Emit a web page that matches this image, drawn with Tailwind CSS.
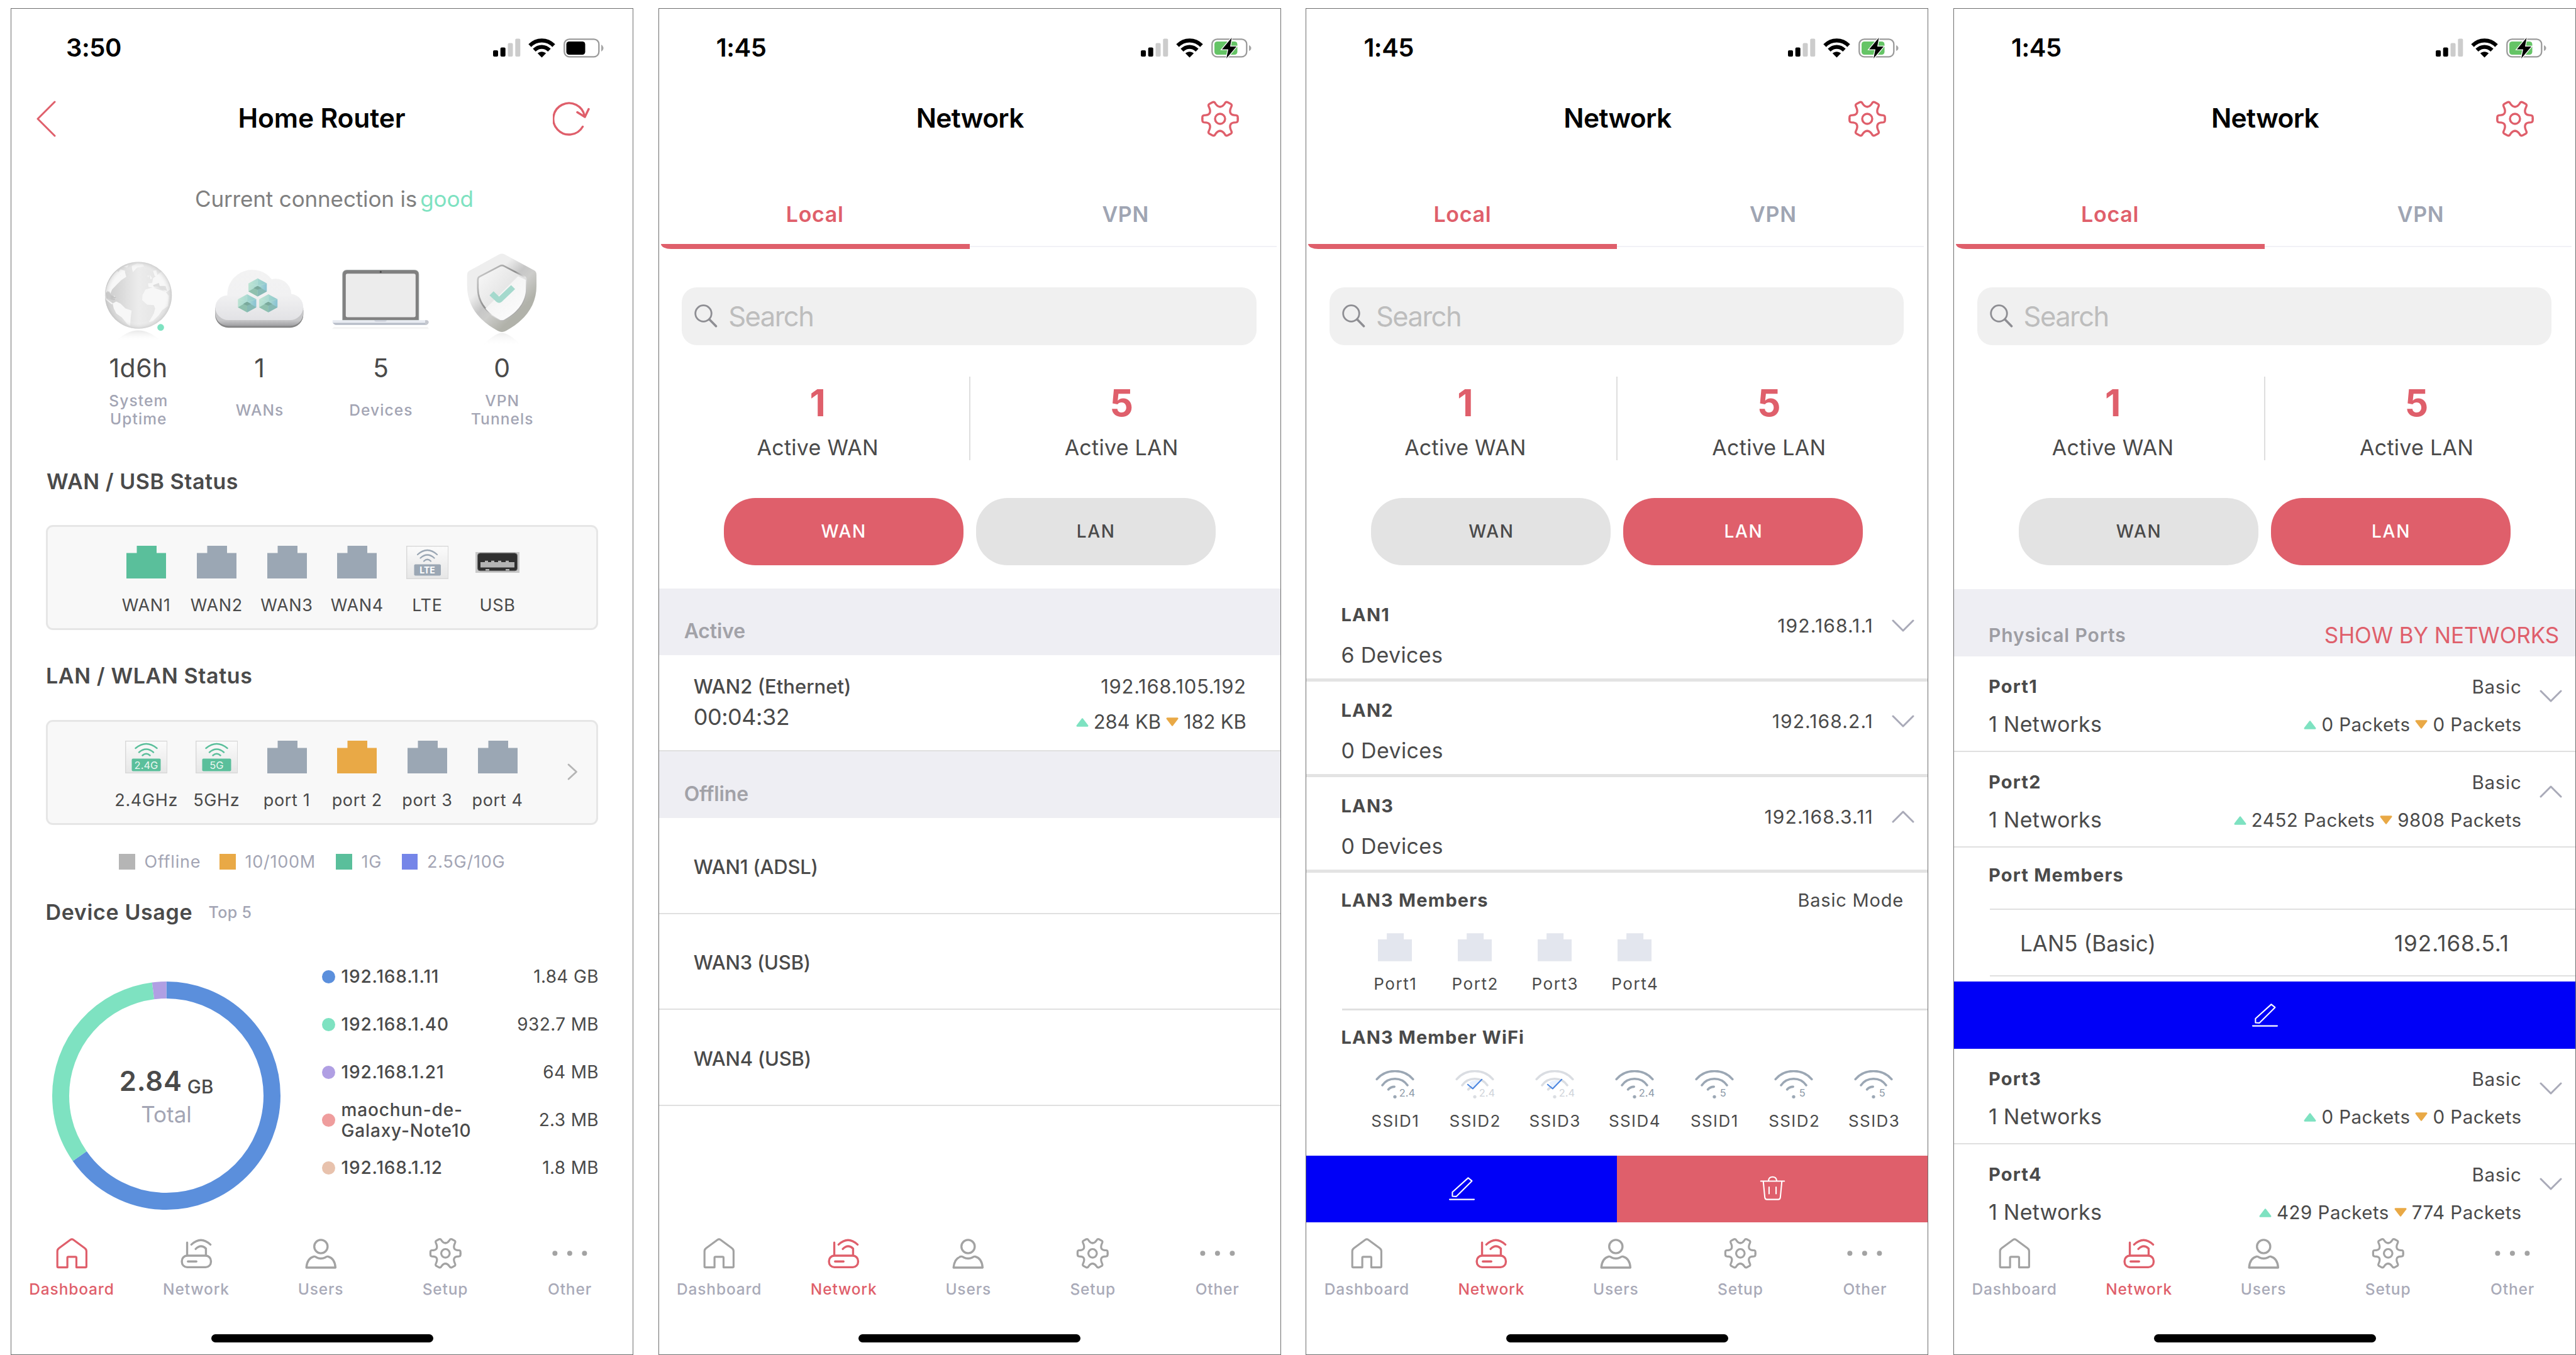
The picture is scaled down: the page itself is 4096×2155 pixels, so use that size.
<!DOCTYPE html>
<html lang="en">
<head>
<meta charset="utf-8">
<title>Router</title>
<script src="https://cdn.jsdelivr.net/npm/@tailwindcss/browser@4"></script>
</head>
<body class="h-[2155px] w-[4096px] overflow-hidden bg-white font-['Inter',sans-serif] text-[#4a4a4a]">

<svg class="absolute size-0" xmlns="http://www.w3.org/2000/svg">
  <defs>
    <path id="gear-quarter" d="M0-20.5C4-20.5 6-23 8-26Q9.8-29.5 13-28L18-25.3Q20.7-24 19-20.5C16.8-16 16-12 18-9C20-6 23.500-6 27-6Q30-5.800 30-2.500V0"/>
    <symbol id="gear" viewBox="-33 -33 66 66">
      <g fill="none" stroke="currentColor" stroke-linecap="round" stroke-linejoin="round">
        <use href="#gear-quarter"/><use href="#gear-quarter" transform="scale(-1 1)"/>
        <use href="#gear-quarter" transform="scale(1 -1)"/><use href="#gear-quarter" transform="scale(-1 -1)"/>
        <circle r="8.500"/>
      </g>
    </symbol>
    <symbol id="home" viewBox="-33 -33 66 66">
      <path fill="none" stroke="currentColor" stroke-width="4" stroke-linejoin="round" d="M-9 28V9Q-9 7-7 7H7Q9 7 9 9V28H27Q29 28 29 26V-4Q29-8 26-10L3-27Q0-29-3-27L-26-10Q-29-8-29-4V26Q-29 28-27 28Z"/>
    </symbol>
    <symbol id="router" viewBox="-33 -33 66 66">
      <g fill="none" stroke="currentColor" stroke-width="4.200" stroke-linecap="round">
        <rect x="-29" y="4.700" width="58" height="23" rx="10.500"/>
        <path d="M-17 16.300H0M-18.500-21.500V4M-10-17.500Q9-35.500 28-17.500M-1.500-8.700Q9-19 19-9.500V4"/>
      </g>
    </symbol>
    <symbol id="user" viewBox="-33 -33 66 66">
      <g fill="none" stroke="currentColor" stroke-width="4.200" stroke-linejoin="round">
        <circle cy="-13.500" r="13.300"/>
        <path d="M-29 28.500C-28 16-22 8.500-14 6.500Q-11.500 6-9 8Q0 12.500 9 8Q11.500 6 14 6.500C22 8.500 28 16 29 28.500Z"/>
      </g>
    </symbol>
    <symbol id="dots" viewBox="-40 -33 80 66">
      <g fill="currentColor"><circle cx="-29.500" r="5"/><circle r="5"/><circle cx="29.500" r="5"/></g>
    </symbol>
    <symbol id="port" viewBox="0 0 63 52">
      <path fill="currentColor" d="M0 52V11.500H16.500V0H48V11.500H63V52Z"/>
    </symbol>
    <symbol id="pencil" viewBox="-27 -27 54 54">
      <path fill="none" stroke="#fff" stroke-width="2.600" stroke-linejoin="round" stroke-linecap="round" d="M-19 15V7L12.500-21.500L20-15.500L-11 15.500ZM-24.500 21.500H24.500"/>
    </symbol>
    <symbol id="trash" viewBox="-27 -27 54 54">
      <path fill="none" stroke="#fff" stroke-width="2.600" stroke-linejoin="round" stroke-linecap="round" d="M-23.500-15H23.500M-8-15V-17Q-7-23.500 0-23.500T8-17V-15M-18.500-14L-15.500 17Q-15 21.500-11 21.500H11Q15 21.500 15.500 17L18.500-14M-7-3V10M7-3V10"/>
    </symbol>
    <symbol id="chevron-down" viewBox="0 0 36 20">
      <path fill="none" stroke="currentColor" stroke-width="3" stroke-linecap="round" stroke-linejoin="round" d="M2 2L18 18L34 2"/>
    </symbol>
    <symbol id="tri-up" viewBox="0 0 20 14"><path fill="#7ee2c1" stroke="#7ee2c1" stroke-width="3" stroke-linejoin="round" d="M10 1.800L18 12.300H2Z"/></symbol>
    <symbol id="tri-down" viewBox="0 0 20 14"><path fill="#e9a946" stroke="#e9a946" stroke-width="3" stroke-linejoin="round" d="M10 12.200L18 1.700H2Z"/></symbol>
    <linearGradient id="tile" x2="0" y2="1"><stop stop-color="#fbfbfb"/><stop offset="1" stop-color="#e6e6e6"/></linearGradient>
    <linearGradient id="globe-fill"><stop stop-color="#c9c9c9"/><stop offset=".5" stop-color="#ececec"/><stop offset="1" stop-color="#e0e0e0"/></linearGradient>
    <radialGradient id="globe-rim"><stop offset=".8" stop-color="#fff" stop-opacity="0"/><stop offset="1" stop-color="#bdbdbd" stop-opacity=".55"/></radialGradient>
    <linearGradient id="fade" x2="0" y2="1"><stop stop-color="#d8d8d8"/><stop offset="1" stop-color="#fff" stop-opacity="0"/></linearGradient>
    <linearGradient id="cloud-top" x2="0" y2="1"><stop stop-color="#f3f3f3"/><stop offset=".5" stop-color="#f1f1f2"/><stop offset="1" stop-color="#e2e2e5"/></linearGradient>
    <linearGradient id="cloud-side" x2="0" y2="1"><stop offset=".7" stop-color="#c6c6c8"/><stop offset="1" stop-color="#9e9ea1"/></linearGradient>
    <linearGradient id="hex" x2="1" y2=".2"><stop stop-color="#bfe5d2"/><stop offset=".6" stop-color="#a9d9d3"/><stop offset="1" stop-color="#8cc4d3"/></linearGradient>
    <g id="cube">
      <path fill="url(#hex)" d="M0-54L55-24V24L0 54L-55 24V-24Z"/>
      <path fill="#97cfc9" fill-opacity=".5" d="M0-54L55-24L0-8Z"/>
      <path fill="#8fc0ae" d="M0-8L-55 24L0 54Z"/><path fill="#86b9b4" d="M0-8L55 24L0 54Z"/>
      <path fill="#7aa99c" d="M0-10L24 4L0 14L-24 4Z"/><path fill="none" stroke="#c8ebdf" stroke-opacity=".6" stroke-width="2" d="M0-54V-10M0-10L-55-24M0-10L55-24"/>
    </g>
    <linearGradient id="shield-rim" x1=".1" y1=".1" x2=".8" y2=".9"><stop offset=".3" stop-color="#eeeeee"/><stop offset=".5" stop-color="#c6c6c6"/><stop offset=".62" stop-color="#cdcdcb"/><stop offset=".85" stop-color="#b1b2aa"/></linearGradient>
    <linearGradient id="shield-edge" x2="1" y2="1"><stop stop-color="#d5d5d5"/><stop offset=".45" stop-color="#8e8e8e"/><stop offset=".6" stop-color="#e3e3e3"/><stop offset="1" stop-color="#777"/></linearGradient>
    <linearGradient id="shield-a" x2="1" y2="1"><stop stop-color="#fafafa"/><stop offset="1" stop-color="#d2d2d2"/></linearGradient>
    <linearGradient id="shield-b" x2="1" y2="1"><stop stop-color="#eee"/><stop offset="1" stop-color="#fff"/></linearGradient>
    <path id="shield-in" d="M1040 121Q1053 114 1066 121L1188 185Q1197 190 1197 204V252C1197 335 1147 398 1068 441Q1053 450 1038 441C960 398 909 335 909 252V204Q909 190 918 185Z"/>
    <clipPath id="shield-clip"><use href="#shield-in"/></clipPath>
    <clipPath id="globe-clip"><circle cx="257.500" cy="296" r="200"/></clipPath>
  </defs>
</svg>

<main id="board" class="flex gap-[39.7px] pt-[13px] pl-[17px]"></main>

<script>
const icon = (name, cls, extra = '') => `<svg class="${cls}" ${extra}><use href="#${name}"/></svg>`;

const battery = charging => charging
  ? `<svg class="h-[33px] w-[66px]" viewBox="0 0 66 33">
      <rect x="2.300" y="2.300" width="55" height="28" rx="8" fill="none" stroke="#9b9b9b" stroke-width="2.300"/>
      <path fill="#a6a6a6" d="M61 12Q64.500 13.500 64.500 16.500T61 21Z"/>
      <rect x="6" y="6" width="36.500" height="21" rx="4.500" fill="#65c466"/>
      <path fill="#000" stroke="#fff" stroke-width="2.500" paint-order="stroke" d="M33.500 0L18 18.500H28L25 33L41 14H31Z"/></svg>`
  : `<svg class="h-[33px] w-[66px]" viewBox="0 0 66 33">
      <rect x="2.300" y="2.300" width="55" height="28" rx="8" fill="none" stroke="#9b9b9b" stroke-width="2.300"/>
      <path fill="#a6a6a6" d="M61 11Q64.500 13.500 64.500 16.500T61 22Z"/>
      <rect x="5.500" y="6" width="30" height="21" rx="4.500" fill="#000"/></svg>`;

const statusBar = (time, charging) => `
  <div class="flex h-[124px] shrink-0 items-center justify-between pr-[45px] pl-[87px] text-[40px] leading-none font-semibold tracking-[-0.011em] text-black">
    <span class="${charging ? 'pl-[4px]' : ''}">${time}</span>
    <div class="flex items-center">
      <svg class="mr-[12px] h-[30px] w-[44px]" viewBox="0 0 44 30">
        <rect y="19" width="8" height="10" rx="2"/><rect x="11.700" y="14.500" width="8" height="14.500" rx="2"/>
        <rect x="23.500" y="7.500" width="8" height="21.500" rx="2" fill="#ccc"/><rect x="35.300" y="0.500" width="8" height="28.500" rx="2" fill="#ccc"/>
      </svg>
      <svg class="mr-[12px] h-[31px] w-[43px]" viewBox="0 0 43 31">
        <path fill="none" stroke="#000" stroke-width="6.200" d="M2.500 11.500C13 .600 30 .600 40.500 11.500M9.500 18.800C16.500 11.800 26.500 11.800 33.500 18.800"/>
        <path d="M21.500 30.500L14.800 23.800C18.500 20.300 24.500 20.300 28.200 23.800Z"/>
      </svg>
      ${battery(charging)}
    </div>
  </div>`;

const navBar = active => `
  <nav class="h-[210px] shrink-0 pt-[23px]">
    <div class="-ml-[3px] grid w-[990px] grid-cols-5">
      ${[['Dashboard', 'home'], ['Network', 'router'], ['Users', 'user'], ['Setup', 'gear'], ['Other', 'dots']].map(([label, name]) => `
      <div class="flex flex-col items-center ${label === active ? 'text-[#df5f6b]' : 'text-[#a3a3a3]'}">
        ${icon(name, name === 'dots' ? 'h-[52.600px] w-[63.800px]' : 'h-[52.600px] w-[52.600px]', 'stroke-width="4"')}
        <div class="mt-[10px] h-[40px] text-[24.5px] leading-[40px] font-medium tracking-[0.034em] ${label === active ? 'text-[#df5f6b]' : 'text-[#a9aab8]'}">${label}</div>
      </div>`).join('')}
    </div>
    <div class="mx-auto mt-[52.100px] h-[13px] w-[353px] rounded-full bg-black"></div>
  </nav>`;

const panel = (body, nav) => `<section class="flex h-[2142px] w-[990px] shrink-0 flex-col border border-[#6e6e6e] bg-white">
  <div class="flex h-[1930px] shrink-0 flex-col">${body}</div>${navBar(nav)}</section>`;

/* ---------- dashboard ---------- */
const globe = `<svg class="h-[159.4px] w-[154.1px]" viewBox="-32.5 0 580 600">
  <path fill="url(#fade)" opacity=".6" d="M120 572Q257 440 395 572Z"/>
  <circle cx="257.500" cy="296" r="200" fill="url(#globe-fill)"/>
  <g clip-path="url(#globe-clip)" fill="#f7f7f7">
    <path d="M55 300Q70 200 130 150L145 165Q130 185 150 180L175 150L185 185L155 205L125 235L100 262L90 285L75 270L62 280L66 315L85 330L105 345L98 350L60 320Z"/>
    <path d="M120 180L150 140L178 150L172 165L140 185Z"/>
    <path d="M218 120L250 105L285 110L292 122L250 130L225 157L220 140Z"/>
    <path d="M103 345L125 333L150 345L180 375L217 388L212 425L208 480L190 468L160 430L125 405L110 375Z"/>
    <path d="M110 296L117 303L112 308ZM100 312L125 313L120 318Z"/>
    <path d="M300 262L345 248L380 262L420 275L440 300L435 360L400 385L380 415L345 450L320 457L350 405L358 375L350 355L310 352L280 325L282 295Z"/>
    <path d="M315 225L340 222L345 195L375 170L400 150L430 190L450 260L425 278L400 262L380 245L345 250L318 246Z"/>
    <path d="M325 172L340 195L330 200ZM310 180L320 178L318 188ZM345 150L365 145L372 185L355 180Z"/>
    <path d="M170 125L200 112L190 130Z"/>
  </g>
  <path fill="#dedede" d="M345 235L380 222L385 240L420 240L430 270L395 262L375 245L350 245Z"/>
  <path fill="#b5b5b5" opacity=".5" d="M63 285L85 272L92 295L125 310L115 325L85 320L65 310Z"/>
  <circle cx="257.500" cy="296" r="200" fill="url(#globe-rim)"/>
  <circle cx="391" cy="488" r="20" fill="#7ee2c1"/></svg>`;
const cloud = `<svg class="h-[159.4px] w-[154.1px]" viewBox="689.5 0 580 600">
  <path fill="#858585" d="M716 385V412A80 78 0 0 0 795 490H1165A80 78 0 0 0 1244 412V385Z"/>
  <path fill="url(#cloud-side)" d="M716 370V400A80 78 0 0 0 795 480H1165A80 78 0 0 0 1244 400V370Z"/>
  <path fill="url(#cloud-top)" d="M717 368A74 74 0 0 1 789 296A149 149 0 0 1 1055 200A93 93 0 0 1 1172 288A78 78 0 0 1 1243 368A78 76 0 0 1 1165 444H795A78 76 0 0 1 717 368Z"/>
  <use href="#cube" transform="translate(970.500 249)"/><use href="#cube" transform="translate(907.500 344)"/><use href="#cube" transform="translate(1034.500 344)"/></svg>`;
const laptop = `<svg class="h-[159.4px] w-[154.1px]" viewBox="40 0 580 600">
  <path fill="#808080" stroke="#9aa19f" stroke-width="3" d="M103 445V172Q103 145 130 145H532Q559 145 559 172V445Z"/>
  <rect x="122" y="167" width="418" height="260" rx="10" fill="#ececec"/><circle cx="331" cy="156" r="6" fill="#4d4d4d"/>
  <path fill="#b7bcc8" d="M43 455H618Q616 473 600 473H61Q46 471 43 455Z"/>
  <path fill="#e8ebf2" d="M43 445H610Q618 447 618 461H43Z"/><path fill="#c5c8cf" d="M597 445H608Q618 447 618 458Q614 473 600 473H597Z"/>
  <path fill="#c9ced8" d="M292 445H368Q366 454 356 454H304Q294 454 292 445Z"/>
  <path fill="#f5f5f5" d="M50 486H612L620 498H40Z"/></svg>`;
const shield = `<svg class="h-[159.4px] w-[154.1px]" viewBox="763 0 580 600">
  <path fill="url(#fade)" opacity=".45" d="M930 600Q1000 535 1035 524Q1053 518 1071 524Q1110 535 1175 600Z"/>
  <path fill="url(#shield-rim)" d="M1035 52Q1053 42 1071 52L1248 148Q1260 155 1260 175V240C1260 360 1190 447 1077 509Q1053 522 1029 509C915 447 845 360 845 240V175Q845 158 857 150Z"/>
  <use href="#shield-in" fill="url(#shield-a)" stroke="url(#shield-edge)" stroke-width="10"/>
  <g clip-path="url(#shield-clip)"><path fill="url(#shield-b)" d="M1150 182L1230 220V480H1000L900 430Z"/></g>
  <path fill="#a5d9cd" d="M979 296L1003 272L1036 304L1108 235L1132 259L1052 335Q1036 348 1020 335Z"/></svg>`;

const wifiTile = (label, color, big) => `<svg class="h-[53px] w-[67.5px]" viewBox="0 0 67.5 53">
  <rect x=".7" y=".7" width="66" height="${big ? 50.5 : 51.6}" fill="url(#tile)" stroke="#d8d8d8" stroke-width="1.400"/>
  ${big
    ? `<path fill="none" stroke="${color}" stroke-width="2.400" stroke-linecap="round" d="M16.500 12Q33.500-2 50.500 12M22 18.500Q33.500 8.500 45 18.500M27.500 23.500Q33.500 18 39.500 23.500"/>
       <rect x="10.500" y="28.500" width="46" height="20" rx="2" fill="${color}"/><text x="33.500" y="44.500" text-anchor="middle" font-size="16.500" fill="#e9f6f0">${label}</text>`
    : `<path fill="none" stroke="${color}" stroke-width="2.200" stroke-linecap="round" d="M18 14Q33.500 0 49 14M22.500 19.500Q33.500 9.500 44.500 19.500M28 24.500Q33.500 19 39 24.500"/>
       <rect x="12.500" y="29.500" width="42.500" height="18" rx="2" fill="${color}"/><text x="33.500" y="43.500" text-anchor="middle" font-size="14" font-weight="700" fill="#fff">${label}</text>`}
  </svg>`;
const usb = `<svg class="h-[53px] w-[70px]" viewBox="0 -10 70 53"><rect width="70" height="33" fill="#c9c9c9"/>
  <rect x="3.500" y="1.800" width="63" height="28" rx="4" fill="#303030" stroke="#666" stroke-width="1"/>
  <path fill="#b4b4b4" d="M8 24.500V16H15V13.800H20V16H25V13.800H30V16H36V13.800H41V16H48V13.800H53V16H62V24.500ZM16 29.500V27H22V29.500ZM48 29.500V27H54V29.500Z"/></svg>`;
const jack = cls => icon('port', `mb-[1px] h-[52px] w-[63px] ${cls}`);
const statusCard = (items, more) => `
  <div class="ml-[55px] flex h-[167px] w-[877.5px] shrink-0 rounded-[11px] border-[3px] border-[#e6e6e6] bg-[#f8f8f8] pl-[100.8px]">
    ${items.map(([svg, label]) => `<div class="flex w-[111.7px] flex-col items-center pt-[29.5px]">${svg}
      <div class="mt-[22.5px] text-[27px] leading-[40px] tracking-[0.024em] whitespace-nowrap">${label}</div></div>`).join('')}
    ${more ? `<svg class="mt-[66px] ml-[54px] h-[27px] w-[18px]" viewBox="0 0 18 27"><path fill="none" stroke="#b5b5b5" stroke-width="2.800" stroke-linecap="round" stroke-linejoin="round" d="M3 2L15.500 13.500L3 25"/></svg>` : ''}
  </div>`;

const dashboard = statusBar('3:50', false) + `
  <header class="flex h-[101px] shrink-0 items-center justify-between pr-[68px] pl-[39px]">
    <svg class="h-[58px] w-[33px]" viewBox="0 0 33 58"><path fill="none" stroke="#df5f6b" stroke-width="3" stroke-linecap="round" stroke-linejoin="round" d="M30 2L3 29L30 56"/></svg>
    <h1 class="pl-[54px] text-[42.5px] leading-none font-semibold tracking-[-0.003em] text-black">Home Router</h1>
    <svg class="h-[56px] w-[59px]" viewBox="0 0 59 56"><path fill="none" stroke="#df5f6b" stroke-width="3.400" stroke-linecap="round" stroke-linejoin="round" d="M47.500 40.500A25 25 0 1 1 50.500 24M39 17.500L51 25L57 12.500"/></svg>
  </header>
  <div class="flex h-[151.6px] shrink-0 items-center gap-[5px] pt-[2px] pl-[292px] text-[35px]">
    <span class="tracking-[-0.004em] text-[#808080]">Current connection is</span><span class="text-[#7ee2c1]">good</span>
  </div>
  <div class="ml-[105.2px] grid w-[771.2px] shrink-0 grid-cols-4">
    ${[[globe, '1d6h', 'System<br>Uptime'], [cloud, '1', 'WANs'], [laptop, '5', 'Devices'], [shield, '0', 'VPN<br>Tunnels']].map(([svg, n, label]) => `
    <div class="flex flex-col items-center text-center">${svg}
      <div class="h-[71px] pl-[1px] text-[41px] leading-[71px] tracking-[0.011em]">${n}</div>
      <div class="flex h-[63px] items-center pl-[1.5px] text-[24.5px] leading-[29.2px] font-medium tracking-[0.045em] text-[#a3a5b4]">${label}</div>
    </div>`).join('')}
  </div>
  <h2 class="flex h-[151.4px] shrink-0 items-center pt-[11.6px] pl-[56px] text-[34px] font-semibold tracking-[0.016em]">WAN / USB Status</h2>
  ${statusCard([[jack('text-[#5abf9b]'), 'WAN1'], [jack('text-[#9ba7b4]'), 'WAN2'], [jack('text-[#9ba7b4]'), 'WAN3'], [jack('text-[#9ba7b4]'), 'WAN4'], [wifiTile('LTE', '#9ba7b4', false), 'LTE'], [usb, 'USB']], false)}
  <h2 class="flex h-[143.1px] shrink-0 items-center pt-[2px] pl-[55px] text-[34px] font-semibold tracking-[0.018em]">LAN / WLAN Status</h2>
  ${statusCard([[wifiTile('2.4G', '#5abf9b', true), '2.4GHz'], [wifiTile('5G', '#5abf9b', true), '5GHz'], [jack('text-[#9ba7b4]'), 'port 1'], [jack('text-[#e9a946]'), 'port 2'], [jack('text-[#9ba7b4]'), 'port 3'], [jack('text-[#9ba7b4]'), 'port 4']], true)}
  <div class="flex h-[116.5px] shrink-0 items-center pl-[171px] text-[27px] leading-none tracking-[0.028em] text-[#a3a5b4]">
    <div class="flex w-[160px] items-center gap-[15px]"><i class="size-[25.5px] bg-[#b5b5b5]"></i>Offline</div>
    <div class="flex w-[185px] items-center gap-[15px]"><i class="size-[25.5px] bg-[#e9a946]"></i>10/100M</div>
    <div class="flex w-[104.5px] items-center gap-[15px]"><i class="size-[25.5px] bg-[#5abf9b]"></i>1G</div>
    <div class="flex items-center gap-[15px]"><i class="size-[25.5px] bg-[#7585e8]"></i>2.5G/10G</div>
  </div>
  <div class="flex h-[43px] shrink-0 items-center pl-[54.5px]">
    <h2 class="w-[259px] text-[34px] font-semibold tracking-[0.019em]">Device Usage</h2>
    <span class="pt-[3px] text-[25px] font-medium tracking-[0.014em] text-[#a3a5b4]">Top 5</span>
  </div>
  <div class="flex">
    <div class="mt-[89px] ml-[65px] grid size-[363px]">
      <svg class="col-start-1 row-start-1 size-[363px] -rotate-90" viewBox="0 0 363 363" fill="none" stroke-width="27">
        <circle cx="181.500" cy="181.500" r="168" stroke="#5b8fdc" pathLength="100" stroke-dasharray="65.300 34.700"/>
        <circle cx="181.500" cy="181.500" r="168" stroke="#7ee2c1" pathLength="100" stroke-dasharray="32.700 67.300" stroke-dashoffset="-65.300"/>
        <circle cx="181.500" cy="181.500" r="168" stroke="#b09fe3" pathLength="100" stroke-dasharray="2 98" stroke-dashoffset="-98"/>
      </svg>
      <div class="col-start-1 row-start-1 flex flex-col items-center pt-[137px]">
        <div class="flex h-[44px] items-center gap-[8px]"><span class="text-[43.5px] leading-none font-semibold tracking-[0.02em]">2.84</span><span class="pt-[18px] text-[29.5px] leading-none font-medium">GB</span></div>
        <div class="mt-[7.700px] text-[35px] leading-[44px] text-[#a3a5b4]">Total</div>
      </div>
    </div>
    <ul class="mt-[43.7px] ml-[65.5px] w-[438.5px]">
      ${[['bg-[#5b8fdc]', '192.168.1.11', '1.84 GB'], ['bg-[#7ee2c1]', '192.168.1.40', '932.7 MB'], ['bg-[#b09fe3]', '192.168.1.21', '64 MB'], ['bg-[#ef9d9d]', 'maochun-de-<br>Galaxy-Note10', '2.3 MB'], ['bg-[#e8c2ad]', '192.168.1.12', '1.8 MB']].map(([dot, name, size]) => `
      <li class="flex h-[76px] items-center text-[28px] leading-[33px]">
        <i class="size-[21px] shrink-0 rounded-full ${dot}"></i>
        <span class="ml-[10px] font-medium tracking-[0.03em] whitespace-nowrap">${name}</span>
        <span class="-mr-[2px] ml-auto tracking-[0.013em]">${size}</span>
      </li>`).join('')}
    </ul>
  </div>`;

/* ---------- network ---------- */
const tab = (label, on) => `<button class="flex-1 pl-[2px] text-[34px] leading-[40px] font-semibold tracking-[0.02em] ${on ? 'text-[#df5f6b]' : 'text-[#9fa5b3]'}">${label}</button>`;
const pill = (label, on) => `<button class="h-[106.6px] w-[381px] rounded-[50px] pl-[1px] text-[28px] font-medium tracking-[0.06em] ${on ? 'bg-[#df5f6b] text-white' : 'bg-[#e3e3e3] text-[#4a4a4a]'}">${label}</button>`;
const networkTop = sel => statusBar('1:45', true) + `
  <header class="flex h-[101px] shrink-0 items-center justify-between pr-[65px] pl-[66px]">
    <span class="w-[62px]"></span>
    <h1 class="text-[42.5px] leading-none font-semibold tracking-[-0.016em] text-black">Network</h1>
    ${icon('gear', 'size-[62px] text-[#df5f6b]', 'stroke-width="3.600"')}
  </header>
  <div class="flex h-[149px] shrink-0 items-end pb-[27px]">${tab('Local', true)}${tab('VPN', false)}</div>
  <div class="flex h-[8px] shrink-0 pr-[6px] pl-[3px]"><i class="w-[491px] rounded-bl-[16px_8px] bg-[#df5f6b]"></i><i class="mt-[2.5px] h-[2.6px] flex-1 bg-[#f1f1f6]"></i></div>
  <div class="mt-[61px] ml-[36.5px] flex h-[91.6px] w-[913.5px] shrink-0 items-center rounded-[24px] bg-[#f0f0f0] pl-[20px]">
    <svg class="h-[37px] w-[37px]" viewBox="0 0 37 37"><circle cx="14.500" cy="14.500" r="12.800" fill="none" stroke="#8e8e93" stroke-width="2.800"/><path stroke="#8e8e93" stroke-width="3.600" stroke-linecap="round" d="M24 24L34.500 34.800"/></svg>
    <span class="ml-[17px] pt-[1px] text-[43.5px] leading-none tracking-[-0.035em] text-[#bdbdbd]">Search</span>
  </div>
  <div class="mt-[50.4px] flex h-[140px] shrink-0 items-start px-[12px] text-center">
    ${[['1', 'Active WAN'], ['5', 'Active LAN']].map(([n, label], i) => `
    ${i ? '<i class="h-[132.6px] w-[2px] bg-[#dedede]"></i>' : ''}
    <div class="flex-1"><div class="text-[58.7px] leading-[84.6px] font-bold text-[#df5f6b]">${n}</div>
      <div class="text-[34px] leading-[55.4px] tracking-[0.008em]">${label}</div></div>`).join('')}
  </div>
  <div class="mt-[53px] flex shrink-0 justify-center gap-[20px]">${pill('WAN', sel === 'WAN')}${pill('LAN', sel === 'LAN')}</div>`;

const traffic = (up, down, cls) => `<div class="flex h-[30px] items-center leading-[30px] whitespace-nowrap ${cls}">
  ${icon('tri-up', 'mt-[2px] mr-[8px] h-[14px] w-[20px]')}${up}${icon('tri-down', 'mr-[8px] ml-[8px] h-[14px] w-[20px]')}${down}</div>`;
const groupBar = label => `<div class="flex h-[106px] shrink-0 items-center bg-[#eeeef3] pt-[28.6px] pl-[40px] text-[32px] font-semibold tracking-[-0.005em] text-[#a2a2a8]">${label}</div>`;

const wanView = networkTop('WAN') + `
  <div class="h-[37.8px] shrink-0"></div>${groupBar('Active')}
  <div class="flex h-[153px] shrink-0 justify-between border-b-[2.5px] border-[#e0e0e0] pt-[29.2px] pr-[54px] pl-[55px]">
    <div><div class="text-[31px] leading-[40px] font-medium">WAN2 (Ethernet)</div><div class="mt-[6.6px] text-[36px] leading-[44px] tracking-[-0.013em]">00:04:32</div></div>
    <div class="flex flex-col items-end"><div class="text-[31px] leading-[40px] tracking-[0.023em]">192.168.105.192</div>${traffic('284 KB', '182 KB', 'mt-[21px] text-[31px] tracking-[-0.004em]')}</div>
  </div>
  ${groupBar('Offline')}
  ${['WAN1 (ADSL)', 'WAN3 (USB)', 'WAN4 (USB)'].map(t => `<div class="flex h-[152.4px] shrink-0 items-center border-b-[2.5px] border-[#e0e0e0] pt-[5px] pl-[55px] text-[31px] font-medium tracking-[-0.007em]">${t}</div>`).join('')}`;

const chevron = up => icon('chevron-down', `h-[20px] w-[36px] text-[#a9aab8] ${up ? 'rotate-180' : ''}`);
const wifi = (band, checked) => `<svg class="h-[45.5px] w-[64px]" viewBox="-40 0 80 57">
  <g fill="none" stroke="${checked ? '#dadde2' : '#9ba7b4'}" stroke-width="4.500" stroke-linecap="round"><path d="M-36 18C-18-3.500 18-3.500 36 18M-25 30C-13 13 13 13 25 30M-13 38.500C-10 35 -5 33 -1 33"/></g>
  <circle cy="53" r="3.300" fill="${checked ? '#dadde2' : '#9ba7b4'}"/>
  <text x="${band === '5' ? 11 : 8.5}" y="52.5" font-size="20.500" fill="${checked ? '#d0d4da' : '#8d9aa8'}">${band}</text>
  ${checked ? '<path d="M-11 24Q0 18 11 22L-4 36Z" fill="#e8f1fd"/><path fill="none" stroke="#4b86e0" stroke-width="2.600" stroke-linecap="round" stroke-linejoin="round" d="M-14 28.500L-4 37L14 18.500"/>' : ''}</svg>`;

const lanView = networkTop('LAN') + `
  <div class="h-[33px] shrink-0"></div>
  ${[['LAN1', '6 Devices', '192.168.1.1', false], ['LAN2', '0 Devices', '192.168.2.1', false], ['LAN3', '0 Devices', '192.168.3.11', true]].map(([n, d, ip, up]) => `
  <div class="flex h-[152.2px] shrink-0 border-b-[5px] border-[#e3e3e3] pr-[21px] pl-[55px]">
    <div class="pt-[26px]"><div class="text-[29px] leading-[40px] font-bold tracking-[0.044em]">${n}</div><div class="mt-[22px] text-[34px] leading-[44px] tracking-[0.01em]">${d}</div></div>
    <div class="ml-auto flex h-[127px] items-center gap-[29.5px]"><span class="text-[30px] tracking-[0.037em]">${ip}</span>${chevron(up)}</div>
  </div>`).join('')}
  <div class="flex h-[64px] shrink-0 justify-between pt-[24px] pr-[38.5px] pl-[55px] text-[29px] leading-[40px]"><b class="tracking-[0.041em]">LAN3 Members</b><span class="tracking-[0.027em]">Basic Mode</span></div>
  <div class="mt-[32px] flex shrink-0 pl-[77.2px]">
    ${['Port1', 'Port2', 'Port3', 'Port4'].map(p => `<div class="flex w-[127px] flex-col items-center">${icon('port', 'h-[45px] w-[54px] text-[#e3e6ee]')}<div class="mt-[15.7px] pl-[1.5px] text-[26px] leading-[40px] tracking-[0.06em]">${p}</div></div>`).join('')}
  </div>
  <div class="mt-[19.3px] ml-[56.5px] h-[2.7px] shrink-0 bg-[#e0e0e0]"></div>
  <b class="mt-[23px] shrink-0 pl-[55px] text-[29px] leading-[40px] tracking-[0.039em]">LAN3 Member WiFi</b>
  <div class="mt-[31.7px] flex shrink-0 pl-[77.2px]">
    ${[['SSID1', '2.4', 0], ['SSID2', '2.4', 1], ['SSID3', '2.4', 1], ['SSID4', '2.4', 0], ['SSID1', '5', 0], ['SSID2', '5', 0], ['SSID3', '5', 0]].map(([s, b, c]) => `<div class="flex w-[126.9px] shrink-0 flex-col items-center">${wifi(b, c)}<div class="mt-[16.3px] pl-[1.5px] text-[26px] leading-[40px] tracking-[0.055em]">${s}</div></div>`).join('')}
  </div>
  <div class="mt-[34.5px] flex h-[106.3px] shrink-0">
    <div class="flex flex-1 items-center justify-center bg-[#0000f7]">${icon('pencil', 'size-[43px]')}</div>
    <div class="flex flex-1 items-center justify-center bg-[#df5f6b]">${icon('trash', 'size-[43px]')}</div>
  </div>`;

const portRow = (name, up, down, open, border = true) => `
  <div class="flex h-[152.1px] shrink-0 pr-[21px] pl-[55px] ${border ? 'border-b-[2.5px] border-[#e0e0e0]' : ''}">
    <div class="pt-[28px]"><div class="text-[29px] leading-[40px] font-bold tracking-[0.041em]">${name}</div><div class="mt-[25px] text-[34px] leading-[30px] tracking-[0.006em]">1 Networks</div></div>
    <div class="ml-auto flex flex-col items-end pt-[28px]"><div class="text-[29.5px] leading-[40px] tracking-[0.025em]">Basic</div>${traffic(up + ' Packets', down + ' Packets', 'mt-[25px] text-[29.5px] tracking-[0.016em]')}</div>
    <div class="ml-[28.5px] flex h-[127px] items-center">${chevron(open)}</div>
  </div>`;
const portsView = networkTop('LAN') + `
  <div class="mt-[38px] flex h-[107px] shrink-0 items-center justify-between bg-[#eeeef3] pt-[40px] pr-[26px] pl-[55px]">
    <span class="text-[30px] font-semibold tracking-[0.029em] text-[#9d9da3]">Physical Ports</span><span class="pt-[1px] text-[35px] tracking-[-0.004em] text-[#df5f6b]">SHOW BY NETWORKS</span>
  </div>
  ${portRow('Port1', 0, 0, false)}${portRow('Port2', 2452, 9808, true)}
  <div class="ml-[57px] flex h-[99.1px] shrink-0 items-center border-b-[2.5px] border-[#e0e0e0] pb-[9px] text-[29px] font-bold tracking-[0.041em]"><span class="-ml-[2px]">Port Members</span></div>
  <div class="ml-[57px] flex h-[106.3px] shrink-0 items-center justify-between border-b-[2.5px] border-[#e0e0e0] pt-[3px] pr-[105px] pl-[48px] text-[35px]"><span>LAN5 (Basic)</span><span class="tracking-[0.028em]">192.168.5.1</span></div>
  <div class="mt-[8px] flex h-[106.7px] shrink-0 items-center justify-center bg-[#0000f7]">${icon('pencil', 'size-[43px]')}</div>
  ${portRow('Port3', 0, 0, false)}${portRow('Port4', 429, 774, false, false)}`;

document.getElementById('board').innerHTML =
  panel(dashboard, 'Dashboard') + panel(wanView, 'Network') + panel(lanView, 'Network') + panel(portsView, 'Network');
</script>
</body>
</html>
